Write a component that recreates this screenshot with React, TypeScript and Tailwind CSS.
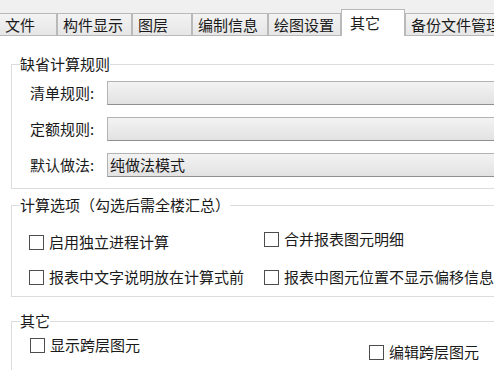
import React from 'react'

const tabs = [
  { label: '文件', w: 'w-[58px] -ml-px' },
  { label: '构件显示', w: 'w-[75px]' },
  { label: '图层', w: 'w-[60px]' },
  { label: '编制信息', w: 'w-[76px]' },
  { label: '绘图设置', w: 'w-[73px]' },
  { label: '其它', w: 'w-[64px]', active: true },
  { label: '备份文件管理', w: 'w-[110px]' },
]

const Checkbox = ({ label, className = '' }: { label: string; className?: string }) => (
  <label className={`flex h-[16px] items-center gap-[5px] whitespace-nowrap ${className}`}>
    <span className="h-[15px] w-[15px] shrink-0 border border-[#4d4d4d] bg-white" />
    <span className="leading-[16px]">{label}</span>
  </label>
)

const RuleRow = ({ label, value }: { label: string; value?: string }) => (
  <div className="flex h-[24px] items-center">
    <span className="w-[95px] shrink-0 pl-[18px] leading-[18px] whitespace-nowrap">{label}</span>
    <div className="flex h-[24px] flex-1 items-center border border-[#b3b3b3] border-b-[#909090] bg-linear-to-b from-[#f3f3f3] to-[#e2e2e2] pl-[2px] leading-[18px]">
      {value}
    </div>
  </div>
)

export default function App() {
  return (
    <div
      className="h-[370px] w-[494px] overflow-hidden bg-white text-[15px] text-[#1a1a1a]"
      style={{ fontFamily: '"Noto Sans CJK SC", "Noto Sans", sans-serif' }}
    >
      <div className="flex items-end border-b border-[#b9b9b9] bg-[#f0f0f0] pt-[9px]">
        {tabs.map((tab) =>
          tab.active ? (
            <div
              key={tab.label}
              className={`${tab.w} relative z-10 -mb-px h-[27px] shrink-0 border border-b-0 border-[#b9b9b9] bg-white pt-[3px] pl-[8px] leading-[20px]`}
            >
              {tab.label}
            </div>
          ) : (
            <div
              key={tab.label}
              className={`${tab.w} h-[22px] shrink-0 border border-b-0 border-[#b9b9b9] bg-linear-to-b from-[#f3f3f3] to-[#e6e6e6] pl-[5px] leading-[21px] whitespace-nowrap`}
            >
              {tab.label}
            </div>
          ),
        )}
      </div>

      <fieldset className="mt-[20px] ml-[11px] w-[500px] border border-[#dcdcdc] pb-[11px]">
        <legend className="ml-[8px] leading-[16px]">缺省计算规则</legend>
        <div className="flex flex-col gap-[12px] pt-[9px]">
          <RuleRow label="清单规则:" />
          <RuleRow label="定额规则:" />
          <RuleRow label="默认做法:" value="纯做法模式" />
        </div>
      </fieldset>

      <fieldset className="mt-[8px] ml-[11px] w-[500px] border border-[#dcdcdc] pb-[11px]">
        <legend className="ml-[8px] leading-[16px]">计算选项（勾选后需全楼汇总）</legend>
        <div className="grid grid-cols-[235px_1fr] gap-y-[19px] pt-[21px] pl-[17px]">
          <Checkbox label="启用独立进程计算" />
          <Checkbox label="合并报表图元明细" className="-mt-[3px]" />
          <Checkbox label="报表中文字说明放在计算式前" />
          <Checkbox label="报表中图元位置不显示偏移信息" />
        </div>
      </fieldset>

      <fieldset className="mt-[16px] ml-[11px] w-[500px] border border-[#dcdcdc] pb-[11px]">
        <legend className="ml-[8px] leading-[16px]">其它</legend>
        <div className="flex flex-col gap-[11px] pt-[8px] pl-[18px]">
          <div className="flex items-start">
            <Checkbox label="显示跨层图元" className="w-[339px]" />
            <Checkbox label="编辑跨层图元" className="mt-[7px]" />
          </div>
          <Checkbox label="" />
        </div>
      </fieldset>
    </div>
  )
}
